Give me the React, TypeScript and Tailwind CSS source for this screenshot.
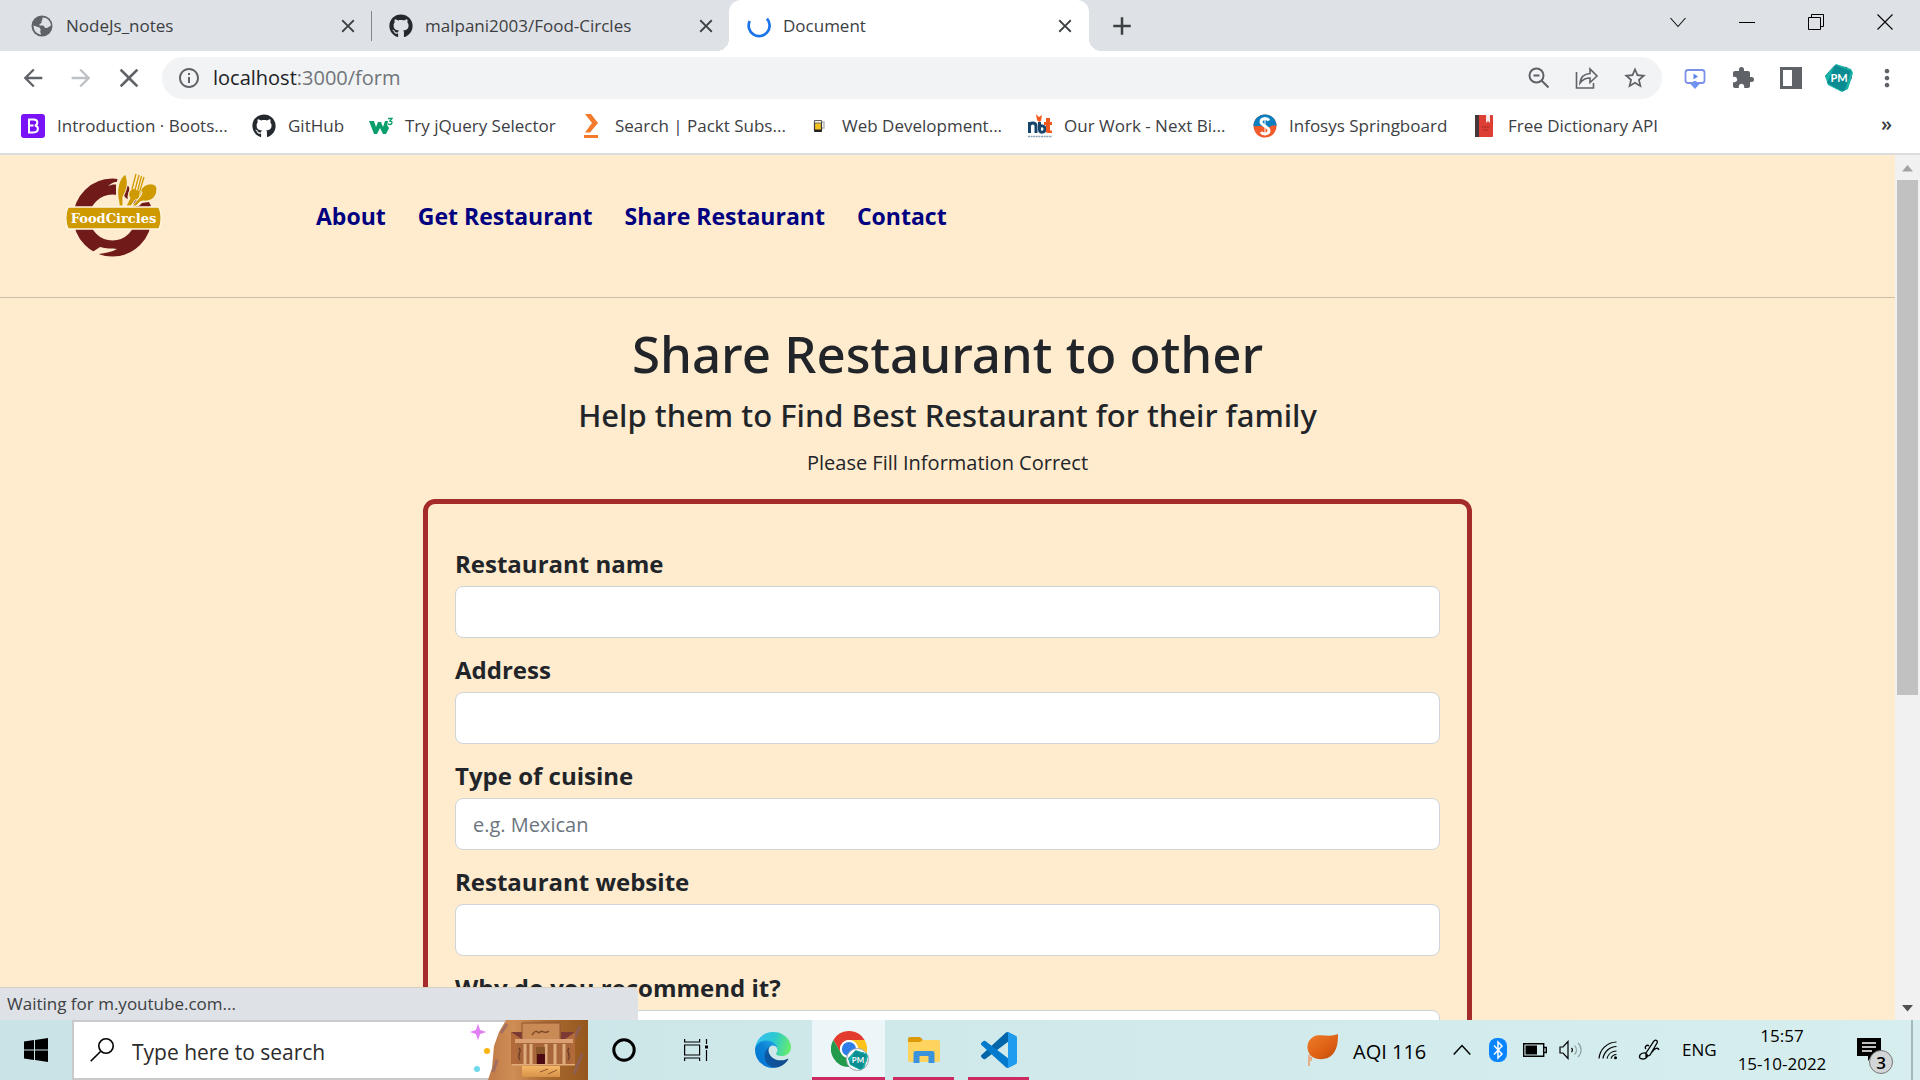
import React, { useId } from "react";
import { FaGithub } from "react-icons/fa";
import {
  MdArrowBack,
  MdArrowForward,
  MdClose,
  MdAdd,
  MdInfoOutline,
  MdStarBorder,
  MdExtension,
  MdMoreVert,
} from "react-icons/md";

/* ---------- browser icons ---------- */

const GlobeIcon = () => (
  <svg viewBox="0 0 24 24" className="size-6">
    <circle cx="12" cy="12" r="10.500" fill="#5f6368" />
    <path d="M12.500 3.500c4.500 0 8 3.500 8.500 8-2 1-3 3-5.500 2.500-1.500-.5-1-2.500-3-2.500H9.500c-.5-2 2.500-2 2-3.500-.3-1.500 1.500-2 1-4.500zM3.500 11.500l4.500 1.500c2 .5 3 2 2.500 3.500-.8 1.500.5 2.500.5 4-4.500-.5-7.500-4-7.500-9z" fill="#dee1e6" />
  </svg>
);

const BootstrapIcon = () => (
  <svg viewBox="0 0 24 24" className="size-6">
    <rect width="24" height="24" rx="3" fill="#7a12f8" />
    <path
      d="M8 5.500h4.600c2.400 0 3.700 1.100 3.700 3 0 1.500-1 2.600-2.400 2.900 1.800.2 3 1.400 3 3.200 0 2.400-1.700 3.900-4.500 3.900H8zM8 11.500h4.500M8 18V6"
      fill="none"
      stroke="#fff"
      strokeWidth="2"
    />
  </svg>
);

const W3Icon = () => (
  <svg viewBox="0 0 24 24" className="size-6">
    <path d="M0 7h5l2 6 2-5h3l2 5 2-6h3l-1 4 2 3-3 6h-3l-3-6-3 6H5z" fill="#0a9f6a" />
    <path d="M19 4.500h4l-2 2.500c3 .3 2.500 3.500-.5 3.500-1 0-1.500-.5-1.800-1" fill="none" stroke="#0a9f6a" strokeWidth="1.300" />
  </svg>
);

const PacktIcon = () => (
  <svg viewBox="0 0 24 24" className="size-6">
    <path d="M6 0h6l7 9-8 9.500H6L13 9z" fill="#f47a2c" />
    <path d="M5 21h14v3H5z" fill="#f47a2c" />
  </svg>
);

const BeerIcon = () => (
  <svg viewBox="0 0 24 24" className="size-6">
    <path d="M15 8h3v6h-3" fill="none" stroke="#b9b9b9" strokeWidth="1.500" />
    <rect x="8.500" y="6.500" width="7" height="11" rx="1" fill="#f0c320" stroke="#3b3b3b" strokeWidth="1.200" />
    <path d="M8.500 6.500h7v2.500h-7z" fill="#f7f3e2" stroke="#555" strokeWidth=".8" />
    <path d="M8.500 15.500h7V18h-7z" fill="#222" />
  </svg>
);

const NbtIcon = () => (
  <svg viewBox="0 0 24 24" className="size-6">
    <path d="M1.500 19V8M1.500 12c0-4 6.500-4 6.500 0v7M11.500 8v8c0 3 5.500 3 5.500-1 0-4-5.500-4-5.500-1" fill="none" stroke="#17456b" strokeWidth="3" />
    <path d="M8 0l3 3 3-2-1 6-2 1-2-2zM18 4h4v4h2v3h-2v5.500h2V19h-4c-1.500 0-2-1-2-2v-6h-2V8h2z" fill="#f4581c" />
    <path d="M0 22.500h24" stroke="#8aa2b5" strokeWidth="1.500" strokeDasharray="2 .6" />
  </svg>
);

const InfosysIcon = () => (
  <svg viewBox="0 0 24 24" className="size-6">
    <circle cx="12" cy="12" r="11.500" fill="#f15a2b" />
    <path d="M.5 12a11.500 11.500 0 0 1 23 0c-4-3-8 4-12 1-4-2-8 0-11-1z" fill="#0c7fc0" />
    <path d="M16 6.500c-2-3-8-2-8 1.500s8 4.500 8 8.500-6 4.500-8 1.500" fill="none" stroke="#fff" strokeWidth="3" />
    <path d="M12 3v18" stroke="#fff" strokeWidth="1" />
  </svg>
);

const DictionaryIcon = () => (
  <svg viewBox="0 0 24 24" className="size-6">
    <rect x="3" y="1" width="18" height="22" rx="1" fill="#dd3f35" />
    <path d="M3 1h4v22H3z" fill="#44383a" />
    <path d="M14 1h4v8l-2-2-2 2z" fill="#f5ebe8" />
    <path d="M9.500 13h8M11 16h5" stroke="#a92b24" strokeWidth="1" />
  </svg>
);

const SpinnerIcon = () => (
  <svg viewBox="0 0 24 24" className="size-6">
    <path d="M2.700 7A10.500 10.500 0 1 0 20 4.600" fill="none" stroke="#1a73e8" strokeWidth="2.700" />
  </svg>
);

const ZoomOutIcon = () => (
  <svg viewBox="0 0 24 24" className="size-6" fill="none" stroke="#5f6368" strokeWidth="2">
    <circle cx="9.500" cy="9.500" r="7" />
    <path d="M14.500 14.500l7 7M6.500 9.500h6" />
  </svg>
);

const ShareIcon = () => (
  <svg viewBox="0 0 24 24" className="size-6" fill="none" stroke="#5f6368" strokeWidth="1.600">
    <path d="M1.500 6v16h17v-5M5 17c.5-5.500 3.500-9 10-9.500V3l7 7-7 6.500V12c-4.500 0-7.500 1.500-10 5z" />
  </svg>
);

const CaptureIcon = () => (
  <svg viewBox="0 0 24 24" className="size-6">
    <rect x="2.500" y="4" width="19" height="13" rx="2.500" fill="#fff" stroke="#7c8fe8" strokeWidth="1.800" />
    <path d="M10.500 7.500l4.500 3-4.500 3z" fill="#5b86f0" />
    <path d="M12 15v4" stroke="#6d93f5" strokeWidth="3" />
    <path d="M7.500 18h9L12 23z" fill="#6d93f5" />
  </svg>
);

const SidePanelIcon = () => (
  <svg viewBox="0 0 24 24" className="size-6">
    <path d="M1 1h22v22H1zM4 4v16h9V4z" fill="#5f6368" fillRule="evenodd" />
  </svg>
);

const ProfileBadge = ({ className }: { className: string }) => (
  <svg viewBox="0 0 28 28" className={className}>
    <path d="M9 2l13 1 5 11-8 13-14-6L0 12z" fill="#2b3f8c" />
    <path d="M11 0l15 5 2 4-5 16-6 3-14-7-3-9z" fill="#18b3a5" />
    <path d="M10 1l16 6-6 19-3 1L2 19z" fill="#0b8c92" />
    <text x="14" y="18" textAnchor="middle" fontSize="11" fontWeight="700" fill="#fff" fontFamily="Lato, sans-serif">
      PM
    </text>
  </svg>
);

/* ---------- window controls ---------- */

const CaretDown = () => (
  <svg viewBox="0 0 16 16" className="size-4" fill="none" stroke="#111" strokeWidth="1.100">
    <path d="M.5 4L8 12.500 15.500 4" />
  </svg>
);
const Minimise = () => (
  <svg viewBox="0 0 16 16" className="size-4">
    <path d="M0 8h16v1H0z" fill="#000" />
  </svg>
);
const Restore = () => (
  <svg viewBox="0 0 16 16" className="size-4" fill="none" stroke="#000">
    <path d="M.5 3.500h12v12H.5zM3.500 3.500v-3h12v12h-3" />
  </svg>
);
const CloseWindow = () => (
  <svg viewBox="0 0 16 16" className="size-4" fill="none" stroke="#000" strokeWidth="1.100">
    <path d="M.5.500l15 15M15.500.500l-15 15" />
  </svg>
);

/* ---------- site logo ---------- */

const FoodCirclesLogo = () => (
  <svg viewBox="0 0 96 86" className="h-[86px] w-24" role="img" aria-label="FoodCircles">
    <circle cx="46.500" cy="44.500" r="31" fill="none" stroke="#701a1a" strokeWidth="16" />
    <path d="M42 13c4-4 9-5 12-4l-2 3c-4-1-7 0-10 1zM25 80l9-6c6 2 12 1 17 2-5 3-12 4-18 5l-4 5z" fill="#ffebcd" />
    <path d="M53 0h27l14 8v16L83 30l2 3H50V12z" fill="#ffebcd" />
    <path d="M59 14c3-3 5 0 4 4s-2 5-1 8c-5-1-5-8-3-12zM67 29l5-6 1 3-5 7zM76 30l7-1 2 4H73z" fill="#701a1a" />
    <path d="M59.500 1C52 6 50 18 53 30v3h4v-9c4-8 6-14 2.500-23z" fill="#cf9a00" stroke="#fff6e2" strokeWidth="1" />
    <path
      d="M67 15l9 4c-1 5-4 8-7 8l-4 6h-5l4-8c-2-3-2-7 3-10zM77 14c5-5 14-4 14 2 0 9-7 13-14 12l-3 1-4 4h-4l7-8c2-4 0-7 4-11z"
      fill="#cf9a00"
      stroke="#fff6e2"
      strokeWidth="1"
    />
    <path d="M70 1l-4 15M73 2l-4 15M75.500 3l-4 15M78 4l-4.500 15" stroke="#cf9a00" strokeWidth="1.300" />
    <path d="M2 34h91c3 6 3 16 0 22H2c-3-6-3-16 0-22z" fill="#cf9a00" stroke="#fff6e2" strokeWidth="1.500" />
    <text x="47.500" y="50" textAnchor="middle" fontFamily="'DejaVu Serif', serif" fontWeight="700" fontSize="13" fill="#fff">
      FoodCircles
    </text>
  </svg>
);

/* ---------- taskbar icons ---------- */

const WindowsIcon = () => (
  <svg viewBox="0 0 24 24" className="size-6">
    <path d="M0 3.500l10-1.400v9.400H0zM11 2l13-2v11.500H11zM0 12.500h10v9.400L0 20.500zM11 12.500h13V24l-13-2z" fill="#000" />
  </svg>
);

const SearchIcon = () => (
  <svg viewBox="0 0 24 24" className="size-6" fill="none" stroke="#000" strokeWidth="1.600">
    <circle cx="16" cy="8" r="7.200" />
    <path d="M10.500 13.500L.7 23.300" />
  </svg>
);

const PetraArt = () => (
  <svg viewBox="0 0 118 60" className="h-full w-[118px] shrink-0" preserveAspectRatio="none">
    <defs>
      <linearGradient id="rock" x1="0" x2="1">
        <stop offset="0" stopColor="#c07a45" />
        <stop offset=".25" stopColor="#cf8e56" />
        <stop offset=".6" stopColor="#a86a30" />
        <stop offset="1" stopColor="#96571f" />
      </linearGradient>
      <linearGradient id="floor" x1="0" x2="0" y1="0" y2="1">
        <stop offset="0" stopColor="#f5b765" />
        <stop offset="1" stopColor="#d6924a" />
      </linearGradient>
    </defs>
    <path d="M0 0h40v2H0zM0 58h22v2H0z" fill="#c8cacb" />
    <path d="M36 0h82v60H18l4-12 2-22 5-14z" fill="url(#rock)" />
    <path d="M37 4l-6 9M27 40l-4 12M112 34l-8 20M110 6l-5 12" stroke="#8a6070" strokeWidth="3" opacity=".6" />
    <path d="M41 12h12v32H41zM92 12h13v32H92z" fill="#b36a3a" />
    <path d="M41 12l12 8v-8zM105 12L91 22V12z" fill="#7c3a34" />
    <path d="M52 3h38v17H52z" fill="#c98a55" stroke="#8d5430" />
    <path d="M62 15c5-8 6 0 8-3s5 3 9-1" fill="none" stroke="#7f4b2b" strokeWidth="1.500" />
    <path d="M47 20h54v24H47z" fill="#a8663a" />
    <path d="M45 19h58v4H45z" fill="#dba173" />
    <path d="M55 24v20M61 24v20M76 24v20M85 24v20M94 24v20" stroke="#dfac80" strokeWidth="3" />
    <path d="M49 28c4 4-3 6 1 12M99 28c-4 4 3 6-1 12" fill="none" stroke="#6e3d24" strokeWidth="1.300" />
    <path d="M66 27h9v17h-9z" fill="#8a5528" />
    <path d="M67 34h8v10h-8z" fill="#4d0a12" />
    <path d="M42 44h63v1.500H42z" fill="#e3ab78" />
    <path d="M52 46h38v11H52z" fill="url(#floor)" />
    <path d="M70 52l8-3M78 54l9-4" stroke="#8d5430" />
    <path d="M8 6l1.500 4.500L14 12l-4.500 1.500L8 18l-1.500-4.500L2 12l4.500-1.500z" fill="#e07ff5" stroke="#e07ff5" strokeWidth="1.500" />
    <circle cx="17" cy="31" r="3" fill="#fbb40a" />
    <circle cx="7" cy="49" r="3" fill="#6fd8ea" />
  </svg>
);

const CortanaIcon = () => (
  <svg viewBox="0 0 24 24" className="size-6">
    <circle cx="12" cy="12" r="10.200" fill="none" stroke="#000" strokeWidth="3" />
  </svg>
);

const TaskViewIcon = () => (
  <svg viewBox="0 0 24 24" className="size-6" fill="none" stroke="#000" strokeWidth="1.200">
    <path d="M.6 7h15v10H.6zM.6 1v3h15V1M.6 23v-3h15v3M22.500 1v5M22.500 12v11" />
    <path d="M21 7.500h3v3h-3z" fill="#000" stroke="none" />
  </svg>
);

const EdgeIcon = () => {
  const id = useId();
  return (
    <svg viewBox="0 0 256 256" className="size-9">
      <defs>
        <linearGradient id={id + "a"} x1="63" y1="178" x2="241" y2="178" gradientUnits="userSpaceOnUse">
          <stop offset="0" stopColor="#0c59a4" />
          <stop offset="1" stopColor="#114a8b" />
        </linearGradient>
        <linearGradient id={id + "b"} x1="157" y1="110" x2="46" y2="231" gradientUnits="userSpaceOnUse">
          <stop offset="0" stopColor="#1b9de2" />
          <stop offset=".4" stopColor="#0d82d5" />
          <stop offset="1" stopColor="#0078d4" />
        </linearGradient>
        <linearGradient id={id + "c"} x1="20" y1="60" x2="250" y2="120" gradientUnits="userSpaceOnUse">
          <stop offset="0" stopColor="#35c1f1" />
          <stop offset=".5" stopColor="#2cc9cf" />
          <stop offset="1" stopColor="#66eb6e" />
        </linearGradient>
      </defs>
      <g transform="translate(-4.63 -4.92)">
        <path fill={`url(#${id}a)`} d="M235.680 195.460a93.730 93.730 0 0 1-10.540 4.710 101.870 101.870 0 0 1-35.900 6.460c-47.320 0-88.540-32.550-88.540-74.320A31.480 31.480 0 0 1 117.130 105c-42.800 1.800-53.800 46.400-53.800 72.530 0 73.880 68.090 81.370 82.760 81.370 7.910 0 19.840-2.300 27-4.560l1.310-.44a128.340 128.340 0 0 0 66.600-52.800 4 4 0 0 0-5.320-5.640z" />
        <path fill={`url(#${id}b)`} d="M110.340 246.340A79.200 79.200 0 0 1 87.600 225a80.720 80.720 0 0 1 29.530-120c3.120-1.470 8.450-4.130 15.540-4a32.350 32.350 0 0 1 25.690 13 31.880 31.880 0 0 1 6.360 18.660c0-.21 24.460-79.600-80-79.600-43.900 0-80 41.660-80 78.210a130.150 130.150 0 0 0 12.110 56 128 128 0 0 0 156.380 67.110 75.550 75.550 0 0 1-62.780-8z" />
        <path fill={`url(#${id}c)`} d="M156.940 153.780c-.81 1.050-3.300 2.500-3.300 5.660 0 2.610 1.700 5.120 4.720 7.230 14.380 10 41.490 8.680 41.560 8.680a59.560 59.560 0 0 0 30.270-8.350A61.380 61.380 0 0 0 260.620 114c.26-22.410-8-37.310-11.340-43.910C228.090 28.760 182.350 4.920 132.610 4.920a128 128 0 0 0-128 126.200c.48-36.540 36.800-66.050 80-66.050 3.500 0 23.460.34 42 10.070 16.340 8.580 24.900 18.940 30.850 29.210 6.180 10.670 7.280 24.150 7.280 29.520s-2.740 13.330-7.800 19.910z" />
      </g>
    </svg>
  );
};

const ChromeIcon = () => (
  <svg viewBox="0 0 48 48" className="size-9">
    <path d="M24 12h20.800A24 24 0 0 0 3.200 12l10.400 18A12 12 0 0 1 24 12z" fill="#e33b2e" />
    <path d="M34.400 30L24 48a24 24 0 0 0 20.800-36H24a12 12 0 0 1 10.400 18z" fill="#fbc31a" />
    <path d="M13.600 30L3.200 12A24 24 0 0 0 24 48l10.400-18a12 12 0 0 1-20.800 0z" fill="#219a4b" />
    <circle cx="24" cy="24" r="12" fill="#fff" />
    <circle cx="24" cy="24" r="9.500" fill="#2f7de9" />
  </svg>
);

const FolderIcon = () => (
  <svg viewBox="0 0 32 28" className="h-7 w-8">
    <path d="M0 2a2 2 0 0 1 2-2h10l3 3-2 4H0z" fill="#dd9a08" />
    <path d="M0 5h12l3-2h15a2 2 0 0 1 2 2v18a2 2 0 0 1-2 2H2a2 2 0 0 1-2-2z" fill="#ffd45e" />
    <path d="M5.500 26V16a2 2 0 0 1 2-2h17a2 2 0 0 1 2 2v10h-6v-7h-9v7z" fill="#3b93dc" />
  </svg>
);

const VsCodeIcon = () => (
  <svg viewBox="0 0 100 100" className="size-9">
    <path d="M96.500 10.800L75.900.9a6.200 6.200 0 0 0-7.100 1.200L1.300 63.600a4.200 4.200 0 0 0 0 6.200l5.500 5a4.200 4.200 0 0 0 5.300.2L93.400 13.400a4.100 4.100 0 0 1 6.600 3.300v-.3a6.300 6.300 0 0 0-3.500-5.600z" fill="#0065a9" />
    <path d="M96.500 89.200l-20.600 9.900a6.200 6.200 0 0 1-7.100-1.200L1.300 36.400a4.200 4.200 0 0 1 0-6.200l5.500-5a4.200 4.200 0 0 1 5.300-.2l81.300 61.600a4.100 4.100 0 0 0 6.600-3.300v.3a6.300 6.300 0 0 1-3.500 5.600z" fill="#007acc" />
    <path d="M75.900 99.100a6.200 6.200 0 0 1-7.100-1.200c2.300 2.300 6.200.7 6.200-2.600V4.700c0-3.300-3.900-4.900-6.200-2.600a6.200 6.200 0 0 1 7.100-1.200l20.600 9.900a6.300 6.300 0 0 1 3.500 5.600v67.200a6.300 6.300 0 0 1-3.500 5.600z" fill="#1f9cf0" />
  </svg>
);

const LeafIcon = () => (
  <svg viewBox="0 0 32 32" className="size-8">
    <defs>
      <linearGradient id="leaf" x1="0" x2="1" y1="0" y2="1">
        <stop offset="0" stopColor="#ef7c2c" />
        <stop offset=".6" stopColor="#dd5f13" />
        <stop offset="1" stopColor="#b94b0a" />
      </linearGradient>
    </defs>
    <path d="M31 0c0 9-1 15-5 20-5 6-15 7-22 2C-1 17-1 7 6 3c7-4 16 1 25-3z" fill="url(#leaf)" />
    <path d="M2 21v11M4 23v4" stroke="#ee9a66" strokeWidth="1.500" />
  </svg>
);

const ChevronUpIcon = () => (
  <svg viewBox="0 0 18 12" className="h-3 w-[18px]" fill="none" stroke="#000" strokeWidth="1.500">
    <path d="M.7 10.500L9 1.500l8.300 9" />
  </svg>
);

const BluetoothIcon = () => (
  <svg viewBox="0 0 18 24" className="h-6 w-[18px]">
    <rect width="18" height="24" rx="8" fill="#0a84ff" />
    <path d="M5 7.500l8 8.500-4 4V4l4 4-8 8.500" fill="none" stroke="#fff" strokeWidth="1.500" />
  </svg>
);

const BatteryIcon = () => (
  <svg viewBox="0 0 24 14" className="h-3.5 w-6">
    <path d="M.7.7h20v12.600H.7zM21 4.500h2.300v5H21" fill="none" stroke="#000" strokeWidth="1.400" />
    <path d="M2.500 2.500H14v9H2.500z" fill="#000" />
  </svg>
);

const VolumeIcon = () => (
  <svg viewBox="0 0 24 20" className="h-5 w-6" fill="none" stroke="#000" strokeWidth="1.200">
    <path d="M1 7h3l5-5.500v17L4 13H1zM12.500 8a3 3 0 0 1 0 4" />
    <path d="M15.500 5.500a6 6 0 0 1 0 9M19 3a9.500 9.500 0 0 1 0 14" stroke="#8fa3a5" />
  </svg>
);

const WifiIcon = () => (
  <svg viewBox="0 0 20 20" className="size-5" fill="none" stroke="#000" strokeWidth="1.200">
    <path d="M1 18.500A18 18 0 0 1 18.500 2M5 18.500A14 14 0 0 1 18.500 6.500M9 18.500a10 10 0 0 1 9.500-7.500M13 18.500a6 6 0 0 1 5.500-4" />
    <circle cx="17.500" cy="17.800" r="1.500" fill="#000" stroke="none" />
  </svg>
);

const PenIcon = () => (
  <svg viewBox="0 0 22 22" className="size-[22px]" fill="none" stroke="#000" strokeWidth="1.300">
    <path d="M8 14l8-12c2-2 4 0 3 2l-7 12-4 2zM8 10c-2-2 1-5 3-3M1.500 18c0-4 5-5 7-3s0 5-3 5-4-1-4-2zM14 13c3-4 6-5 7-2" />
  </svg>
);

const NotificationIcon = () => (
  <svg viewBox="0 0 24 24" className="size-6">
    <path d="M0 0h24v18h-9l-4 5v-5H0z" fill="#000" />
    <path d="M5 5h14M5 9h14M5 13h10" stroke="#fff" strokeWidth="1.300" />
  </svg>
);

/* ---------- browser chrome ---------- */

const tabs = [
  { title: "NodeJs_notes", icon: <GlobeIcon />, layout: "w-[359px] pl-[17px] pr-0" },
  { title: "malpani2003/Food-Circles", icon: <FaGithub className="size-6 text-[#24292f]" />, layout: "w-[357px] pl-[17px] pr-3" },
  { title: "Document", icon: <SpinnerIcon />, layout: "w-[360px] pl-[18px] pr-[13px]" },
];

const bookmarks = [
  { label: "Introduction · Boots...", icon: <BootstrapIcon />, width: "w-[231px]" },
  { label: "GitHub", icon: <FaGithub className="size-6 text-[#24292f]" />, width: "w-[117px]" },
  { label: "Try jQuery Selector", icon: <W3Icon />, width: "w-[210px]" },
  { label: "Search | Packt Subs...", icon: <PacktIcon />, width: "w-[227px]" },
  { label: "Web Development...", icon: <BeerIcon />, width: "w-[222px]" },
  { label: "Our Work - Next Bi...", icon: <NbtIcon />, width: "w-[225px]" },
  { label: "Infosys Springboard", icon: <InfosysIcon />, width: "w-[219px]" },
  { label: "Free Dictionary API", icon: <DictionaryIcon />, width: "w-[219px]" },
];

function TabStrip() {
  return (
    <div className="flex h-[51px] shrink-0 bg-[#dee1e6]">
      <div className="flex pl-[13px]">
        {tabs.map((tab, i) => {
          const active = i === 2;
          return (
            <div
              key={tab.title}
              className={"relative flex items-center text-[#3c4043] " + tab.layout + (active ? " rounded-t-xl bg-white" : "")}
            >
              {active && (
                <>
                  <span className="absolute -left-3 bottom-0 size-3 bg-[radial-gradient(circle_at_0_0,#dee1e6_12px,#fff_12px)]" />
                  <span className="absolute -right-3 bottom-0 size-3 bg-[radial-gradient(circle_at_100%_0,#dee1e6_12px,#fff_12px)]" />
                </>
              )}
              {tab.icon}
              <span className="ml-3 flex-1 truncate">{tab.title}</span>
              <button aria-label={"Close " + tab.title}>
                <MdClose className="size-[22px] text-[#3c4043]" />
              </button>
              {i === 0 && <span className="ml-3 h-[30px] w-px bg-[#80868b]" />}
            </div>
          );
        })}
      </div>
      <button className="ml-[18px] self-center" aria-label="New tab">
        <MdAdd className="size-[30px] text-[#3c4043]" />
      </button>
      <div className="ml-auto flex h-[43px] items-center gap-[53px] pr-[27px]">
        <button aria-label="Search tabs"><CaretDown /></button>
        <button aria-label="Minimise"><Minimise /></button>
        <button aria-label="Restore"><Restore /></button>
        <button aria-label="Close"><CloseWindow /></button>
      </div>
    </div>
  );
}

function IconButton({ label, children }: { label: string; children: React.ReactNode }) {
  return (
    <button aria-label={label} className="grid size-8 shrink-0 place-items-center">
      {children}
    </button>
  );
}

function Toolbar() {
  return (
    <div className="flex h-[54px] shrink-0 items-center gap-4 bg-white px-[17px] text-[#5f6368]">
      <IconButton label="Back"><MdArrowBack className="size-7" /></IconButton>
      <IconButton label="Forward"><MdArrowForward className="size-7 text-[#bdc1c6]" /></IconButton>
      <IconButton label="Stop loading"><MdClose className="size-8" /></IconButton>
      <div className="mx-px flex h-[42px] flex-1 items-center rounded-full bg-[#f1f3f4] pl-[15px] pr-[11px]">
        <MdInfoOutline className="size-6 shrink-0" />
        <div className="ml-3 flex-1 text-[20px] text-[#70757a]">
          <span className="text-[#202124]">localhost</span>:3000/form
        </div>
        <div className="flex items-center gap-4">
          <IconButton label="Zoom"><ZoomOutIcon /></IconButton>
          <IconButton label="Share this page"><ShareIcon /></IconButton>
          <IconButton label="Bookmark this tab"><MdStarBorder className="size-[26px]" /></IconButton>
        </div>
      </div>
      <IconButton label="Screen capture"><CaptureIcon /></IconButton>
      <IconButton label="Extensions"><MdExtension className="size-6" /></IconButton>
      <IconButton label="Side panel"><SidePanelIcon /></IconButton>
      <IconButton label="Profile"><ProfileBadge className="size-7" /></IconButton>
      <IconButton label="Menu"><MdMoreVert className="size-7" /></IconButton>
    </div>
  );
}

function BookmarksBar() {
  return (
    <div className="flex h-[50px] shrink-0 items-center border-b-2 border-[#dadce0] bg-white pb-1.5 pl-[21px] pr-7 text-[#3c4043]">
      {bookmarks.map((b) => (
        <a key={b.label} href="#" className={"flex items-center gap-3 whitespace-nowrap " + b.width}>
          {b.icon}
          {b.label}
        </a>
      ))}
      <button className="ml-auto pb-1 text-[20px] font-semibold" aria-label="More bookmarks">»</button>
    </div>
  );
}

/* ---------- page ---------- */

const fields = [
  { id: "name", label: "Restaurant name", placeholder: "" },
  { id: "address", label: "Address", placeholder: "" },
  { id: "cuisine", label: "Type of cuisine", placeholder: "e.g. Mexican" },
  { id: "website", label: "Restaurant website", placeholder: "" },
];

function Page() {
  return (
    <div className="min-w-0 flex-1 overflow-hidden bg-[#ffebcd] text-[#212529]">
      <header className="flex h-[143px] items-start border-b border-[#cdbea7] pl-[66px] pt-[18px]">
        <FoodCirclesLogo />
        <nav className="ml-[154px] mt-[23px] flex gap-8 text-[23px] leading-10 font-bold text-[#000080]">
          <a href="#">About</a>
          <a href="#">Get Restaurant</a>
          <a href="#">Share Restaurant</a>
          <a href="#">Contact</a>
        </nav>
      </header>
      <main>
        <div className="pt-[22px] text-center">
          <h1 className="font-['Noto_Sans',sans-serif] text-[51px] leading-[66px] font-medium">Share Restaurant to other</h1>
          <h4 className="mt-[9px] font-['Noto_Sans',sans-serif] text-[31px] leading-10 font-medium">Help them to Find Best Restaurant for their family</h4>
          <p className="mt-3 text-[20px] leading-8">Please Fill Information Correct</p>
        </div>
        <form className="mx-auto mt-5 max-w-[1049px] rounded-xl border-[5px] border-[#a52a2a] px-[27px] pt-[42px] pb-10">
          {fields.map((f) => (
            <div key={f.id} className="mb-3.5">
              <label htmlFor={f.id} className="mb-1 block text-[24px] leading-9 font-bold">{f.label}</label>
              <input
                id={f.id}
                type="text"
                placeholder={f.placeholder}
                className="block h-[52px] w-full rounded-lg border border-[#ced4da] bg-white px-[17px] text-[20px] placeholder:text-[#6c757d]"
              />
            </div>
          ))}
          <label htmlFor="reason" className="mb-1 block text-[24px] leading-9 font-bold">Why do you recommend it?</label>
          <textarea id="reason" rows={3} className="block w-full rounded-lg border border-[#ced4da] bg-white px-[17px] py-2 text-[20px]" />
        </form>
      </main>
    </div>
  );
}

function Scrollbar() {
  return (
    <div className="flex w-[25px] shrink-0 flex-col items-center bg-[#f1f1f1]">
      <svg viewBox="0 0 25 25" className="size-[25px] shrink-0">
        <path d="M7 16.500l5.500-6.500 5.500 6.500z" fill="#a3a3a3" />
      </svg>
      <div className="w-[21px] flex-[103] bg-[#c1c1c1]" />
      <div className="flex-[60]" />
      <svg viewBox="0 0 25 25" className="size-[25px] shrink-0">
        <path d="M7 10l5.500 6.500L18 10z" fill="#505050" />
      </svg>
    </div>
  );
}

/* ---------- taskbar ---------- */

function Taskbar() {
  return (
    <footer className="flex h-[60px] shrink-0 items-center bg-linear-to-r from-[#c9e3e6] to-[#d6eeee] text-black">
      <button aria-label="Start" className="grid w-[72px] place-items-center"><WindowsIcon /></button>
      <div className="flex h-full w-[516px] items-center border-l-2 border-[#c8cacb] bg-white">
        <div className="flex h-full min-w-0 flex-1 items-center border-y-2 border-[#c8cacb] pl-4">
          <SearchIcon />
          <input
            aria-label="Search"
            placeholder="Type here to search"
            className="ml-[18px] h-full min-w-0 flex-1 pt-1 text-[21px] outline-none placeholder:text-[#2b2b2b]"
          />
        </div>
        <PetraArt />
      </div>
      <button aria-label="Cortana" className="ml-6"><CortanaIcon /></button>
      <button aria-label="Task view" className="ml-12"><TaskViewIcon /></button>
      <button aria-label="Microsoft Edge" className="ml-[47px]"><EdgeIcon /></button>
      <button aria-label="Google Chrome" className="relative ml-[21px] grid h-full w-[73px] place-items-center border-b-3 border-[#cb2b60] bg-[#ecf5f7]">
        <ChromeIcon />
        <span className="absolute bottom-1.5 right-4 grid size-[23px] place-items-center rounded-full border border-gray-400 bg-white">
          <ProfileBadge className="size-5" />
        </span>
      </button>
      <button aria-label="File Explorer" className="ml-2 grid h-full w-[61px] place-items-center border-b-3 border-[#cb2b60] pt-1"><FolderIcon /></button>
      <button aria-label="Visual Studio Code" className="ml-3.5 grid h-full w-[61px] place-items-center border-b-3 border-[#cb2b60] pt-0.5"><VsCodeIcon /></button>

      <div className="ml-auto flex h-full items-center">
        <LeafIcon />
        <span className="ml-3.5 w-[86px] pt-1 text-[20px] whitespace-nowrap">AQI 116</span>
        <button aria-label="Show hidden icons" className="ml-3.5"><ChevronUpIcon /></button>
        <span className="ml-[18px]"><BluetoothIcon /></span>
        <span className="ml-4"><BatteryIcon /></span>
        <span className="ml-3"><VolumeIcon /></span>
        <span className="ml-[15px]"><WifiIcon /></span>
        <span className="ml-5"><PenIcon /></span>
        <span className="ml-[22px] w-10 text-[17px]">ENG</span>
        <div className="w-[120px] text-center text-[17px] leading-7">
          <div>15:57</div>
          <div>15-10-2022</div>
        </div>
        <button aria-label="Notifications" className="relative mr-[30px] ml-[15px]">
          <NotificationIcon />
          <span className="absolute -right-3 -bottom-3 grid size-6 place-items-center rounded-full border border-[#777] bg-[#d3d6d7] text-[17px] leading-none font-semibold">3</span>
        </button>
        <div className="h-full w-[9px] border-l-2 border-[#a5b8ba]" />
      </div>
    </footer>
  );
}

export default function App() {
  return (
    <div className="flex h-screen flex-col overflow-hidden font-['Open_Sans',sans-serif] text-[17px]">
      <TabStrip />
      <Toolbar />
      <BookmarksBar />
      <div className="relative flex min-h-0 flex-1">
        <Page />
        <Scrollbar />
        <div className="absolute bottom-0 left-0 h-[33px] w-[638px] rounded-tr-md border-t border-[#d6cfc4] bg-[#dee1e6] pl-[7px] leading-8 text-[#3c4043]">
          Waiting for m.youtube.com...
        </div>
      </div>
      <Taskbar />
    </div>
  );
}
